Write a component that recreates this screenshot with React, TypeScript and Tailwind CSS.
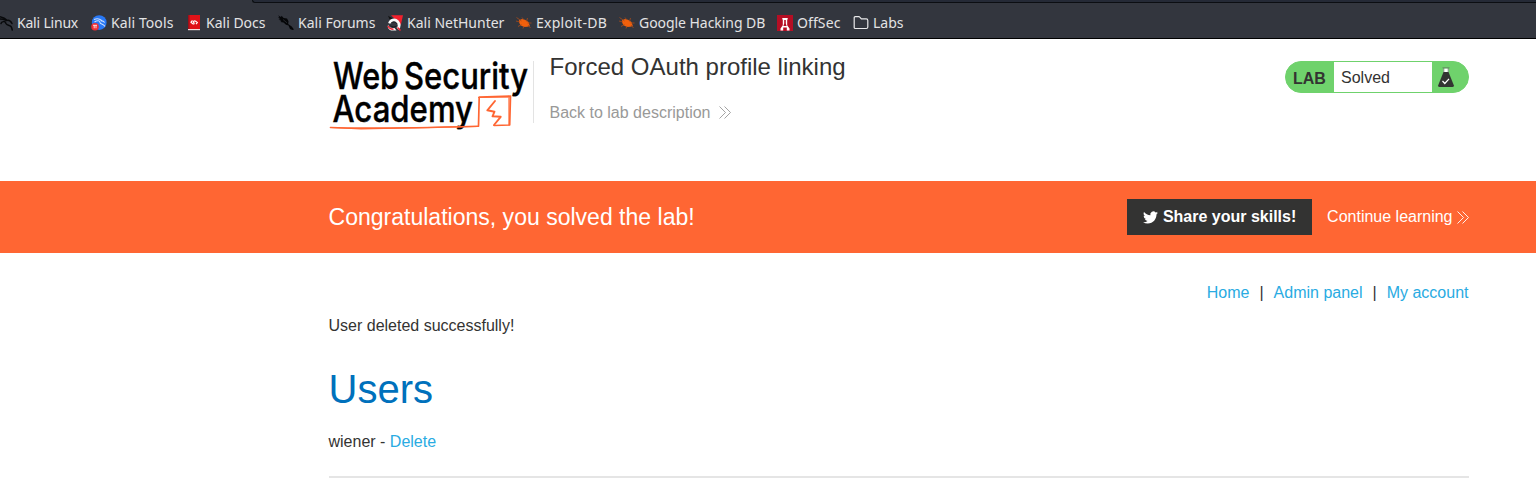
import React from "react";

const DragonIcon = () => (
  <svg viewBox="0 0 16 16" className="size-4" fill="none" stroke="#08090b" strokeLinecap="round">
    <path d="M1 1.500C5 2 8 3 10 5.500M0 4.500c3-1 6-.8 9.500 1M4 8.500c.5-2 4-3 5 0 .8 2.200 3.500 1.200 5 3 .8 1 1 2 1.300 3.500M9.500 5.500c2-.8 4.200.3 5.500 3" strokeWidth="1.500" />
  </svg>
);

const ToolsIcon = () => (
  <svg viewBox="0 0 16 16" className="size-4">
    <circle cx="8.200" cy="7.600" r="7.400" fill="#2878f5" />
    <path d="M3 4.500c3-1.200 6-.5 7.500 1M3.500 7c3-2 5.500-1.500 5.500.5s3.500 1 5 4M10 6c1.500-.4 2.600.2 3.600 1.500" fill="none" stroke="#d0e1fc" strokeWidth="1.100" />
    <circle cx="4" cy="11.700" r="3.800" fill="#ee2f35" />
    <path d="M2 10.300h4M3.200 10.300v3M5 10.300v3" stroke="#fff" strokeWidth=".8" />
  </svg>
);

const DocsIcon = () => (
  <svg viewBox="0 0 16 16" className="size-4">
    <path d="M2 0h12v14H2z" fill="#e01218" />
    <path d="M2 0h1.500v14H2z" fill="#9f1019" />
    <path d="M2 14h12v1.200H2z" fill="#f3d9da" />
    <path d="M6.500 5.500 5 7.200 6.700 8.800c1.500.5 1.800-.4 1-1.300s.3-2.200 2-1.200l1.600 1.300L10 9.200" fill="none" stroke="#fff" strokeWidth="1.200" />
  </svg>
);

const ForumsIcon = () => (
  <svg viewBox="0 0 16 16" className="size-4">
    <path d="M0 .3 3 2 3.600.8l2 2.200 3.400.5 1.500 2.800-.3 2.700 3.500 2.500 2.300 3-1.500.5-2.500-1-1.500-3.500L8 9.800 5.500 7.500 2.500 7l1-1L.5 4.500l2-.3L0 2.500l1.500-.3z" fill="#050608" />
    <path d="m5 4.500 4 3.300" stroke="#44474e" strokeWidth=".5" />
  </svg>
);

const NetHunterIcon = () => (
  <svg viewBox="0 0 16 16" className="size-4">
    <path d="M4 .3h12L13.800 10 9 5z" fill="#f3202d" />
    <path d="M1 .8 6 3.500 2.500 4.300z" fill="#111" />
    <path d="M2.500 8.500C3.500 5 8 3.800 10.500 6.500c2.700 3.200 2 5.500 0 7.300" fill="none" stroke="#f7f7f7" strokeWidth="2.800" />
    <path d="M1 9.500c1 3 3 3.500 6.500 3.500l2 2.500H4Q0 14 1 9.500z" fill="#f7f7f7" />
    <path d="M1 11c1 2.500 3 3.200 5.500 3.200M10.500 12.500l3 3" fill="none" stroke="#ef2333" strokeWidth="1.500" />
    <path d="M3.500 8.500c2-2 5-2.200 6.500.3M3.500 10.800c2 1.300 4.200 1.500 6 .2" fill="none" stroke="#15171c" strokeWidth=".9" />
  </svg>
);

const BugIcon = () => (
  <svg viewBox="0 0 16 16" className="size-4">
    <path d="M3 5.200 6 4l3 .8L12.500 7l1.300 4-2.500.8-3.300.2-3.500-1.700-1.300-2.500z" fill="#f1600c" />
    <path d="m.5 2.500 5 3.500M0 6l4 1M2 11.500 5.500 9.500M7 13.500l1-2.500M6 2.500l1.500 2M11.500 3l-1 3.500M11.500 8h4M12 10l2.500 3" stroke="#a94b1b" strokeWidth=".8" />
  </svg>
);

const OffSecIcon = () => (
  <svg viewBox="0 0 16 16" className="size-4">
    <path d="M0 0h16v16H0z" fill="#b50e24" />
    <path d="M5.300 3h5.400v1.500h-.5v5.800l2.300 3.200v2H9.800v-3H6.200v3H3.500v-2l2.300-3.200V4.500h-.5z" fill="#fff" />
    <path d="M7.200 5h1.600v3.500l.8 2.500H6.400l.8-2.500z" fill="#b50e24" />
  </svg>
);

const FolderIcon = () => (
  <svg viewBox="0 0 16 16" className="size-4" fill="none" stroke="#e8e8e9" strokeWidth="1.200" strokeLinejoin="round">
    <path d="M1.200 12.800V2.700q0-1 1-1h3.600q.6 0 1 .5l1.500 1.700h5q1.500 0 1.500 1.500v6.600q0 1.500-1.500 1.500H2.400q-1.200 0-1.200-.7z" />
  </svg>
);

const bookmarks = [
  { label: "Kali Linux", Icon: DragonIcon, width: "w-[94px]", track: "tracking-[-0.2px]" },
  { label: "Kali Tools", Icon: ToolsIcon, width: "w-[95px]", track: "tracking-[0.1px]" },
  { label: "Kali Docs", Icon: DocsIcon, width: "w-[92px]", track: "" },
  { label: "Kali Forums", Icon: ForumsIcon, width: "w-[109px]", track: "" },
  { label: "Kali NetHunter", Icon: NetHunterIcon, width: "w-[129px]", track: "" },
  { label: "Exploit-DB", Icon: BugIcon, width: "w-[103px]", track: "tracking-[0.27px]" },
  { label: "Google Hacking DB", Icon: BugIcon, width: "w-[158px]", track: "tracking-[-0.05px]" },
  { label: "OffSec", Icon: OffSecIcon, width: "w-[76px]", track: "tracking-[0.1px]" },
  { label: "Labs", Icon: FolderIcon, width: "w-[60px]", track: "" },
];

const DoubleChevron = ({ className }: { className: string }) => (
  <svg viewBox="0 0 12 13" className={className} fill="none" stroke="currentColor" strokeWidth=".9">
    <path d="m.5.5 6 6-6 6M5.500.5l6 6-6 6" />
  </svg>
);

const Logo = () => (
  <svg viewBox="0 0 204 78" className="h-[78px] w-[204px] overflow-visible" role="img" aria-label="Web Security Academy">
    <g fill="#000" stroke="#000" strokeWidth=".4" fontFamily="Inter, sans-serif" fontSize="36.500" fontWeight="500">
      <text x="4" y="33.300" textLength="66" lengthAdjust="spacingAndGlyphs">Web</text>
      <text x="75" y="33.300" textLength="124" lengthAdjust="spacingAndGlyphs">Security</text>
      <text x="3.500" y="66" textLength="140.500" lengthAdjust="spacingAndGlyphs">Academy</text>
    </g>
    <g fill="none" stroke="#ff6633" strokeLinejoin="round" strokeLinecap="round">
      <path d="M1.500 71.500c40 1.700 90 .3 148-1.300l.7-29.200 31.300-.8-.8 28.800-15.500.5" strokeWidth="1.700" />
      <path d="m2 71.500 30 1.300 117.500-2.300M149.500 41.500l31.500-.5M180 40v29" strokeWidth="1.200" />
      <path d="M166 45 158.300 54.300l7.200 1.400-2 4.600 8.200.5L165 69" strokeWidth="1.900" />
    </g>
  </svg>
);

const Flask = () => (
  <svg viewBox="0 0 18 21" className="h-[21px] w-[18px]">
    <path d="M6.500 1.500h5v5h-5z" fill="#fff" />
    <path d="M5.500.8h7M6.800 1v5M11.200 1v5" fill="none" stroke="#607860" strokeWidth=".8" />
    <path d="M6.500 5h5l5.300 13.200q.7 1.800-1.300 1.800h-13Q.5 20 1.200 18.200z" fill="#333332" />
    <path d="m5.500 14 2.300 2.500 4.200-4.700" fill="none" stroke="#fff" strokeWidth="1.200" />
  </svg>
);

const Twitter = () => (
  <svg viewBox="0 0 24 24" className="size-[15px] shrink-0" fill="#fff">
    <path d="M23.950 4.570a10 10 0 0 1-2.820.77 4.960 4.960 0 0 0 2.160-2.720c-.95.550-2 .950-3.130 1.180a4.920 4.920 0 0 0-8.380 4.480C7.690 8.090 4.070 6.130 1.640 3.160a4.820 4.820 0 0 0-.67 2.480c0 1.710.87 3.210 2.190 4.100a4.900 4.900 0 0 1-2.230-.62v.06a4.920 4.920 0 0 0 3.950 4.830 5 5 0 0 1-2.210.09 4.940 4.940 0 0 0 4.600 3.420A9.870 9.870 0 0 1 0 19.540a14 14 0 0 0 7.550 2.210c9.050 0 14-7.500 14-13.980 0-.21 0-.42-.02-.63a9.940 9.940 0 0 0 2.420-2.570z" />
  </svg>
);

export default function App() {
  return (
    <div className="h-[481px] w-full overflow-hidden bg-white font-['Liberation_Sans',sans-serif] text-base leading-6 text-[#333332]">
      <nav className="flex h-[39px] flex-col overflow-hidden border-b border-black bg-[#33363e]">
        <div className="flex h-[3px] shrink-0 justify-end bg-[#33363e]">
          <div className="h-[3px] w-[1284px] rounded-bl-[3px] border-b border-l border-[#0c0e12] bg-[#252a36]" />
        </div>
        <div className="-ml-[3px] flex h-[35px] items-center pt-[5px] font-['Noto_Sans',sans-serif] text-sm text-[#e3e3e4]">
          {bookmarks.map(({ label, Icon, width, track }) => (
            <a key={label} className={`flex h-5 shrink-0 items-center gap-1 whitespace-nowrap ${width} ${track}`}>
              <Icon />
              <span>{label}</span>
            </a>
          ))}
        </div>
      </nav>

      <header className="ml-[329px] flex h-[142px] w-[1140px] items-start">
        <div className="mt-[17px] h-[78px] w-[204px] shrink-0">
          <Logo />
        </div>
        <div className="mt-[22px] h-[62px] w-px bg-[#e3e3e3]" />
        <div className="ml-[15.500px] flex-1 pt-[13px]">
          <h1 className="text-2xl leading-[30px]">Forced OAuth profile linking</h1>
          <a className="mt-[19px] flex items-center gap-[8.500px] text-[#999998]">
            Back to lab description
            <DoubleChevron className="mb-0.5 h-[13px] w-3" />
          </a>
        </div>
        <div className="mt-[22px] flex h-8 w-[184px] overflow-hidden rounded-full border border-[#6fd26c] bg-[#6fd26c]">
          <strong className="w-12 pl-[7px] leading-[34px]">LAB</strong>
          <span className="w-[98px] bg-white pl-[7px] leading-[31px]">Solved</span>
          <span className="flex items-center pl-[5px]"><Flask /></span>
        </div>
      </header>

      <section className="h-[72px] bg-[#ff6633] text-white">
        <div className="ml-[328.500px] flex h-full w-[1140.500px] items-center">
          <h2 className="flex-1 text-[23.040px]">Congratulations, you solved the lab!</h2>
          <button className="flex h-9 w-[185px] items-center justify-center gap-[4.500px] bg-[#333332] pl-[0.500px] font-bold">
            <Twitter />
            Share your skills!
          </button>
          <a className="ml-[15px] flex items-center gap-[4.500px]">
            Continue learning
            <DoubleChevron className="h-[13px] w-3" />
          </a>
        </div>
      </section>

      <main className="ml-[328.500px] w-[1140.500px] pt-7">
        <nav className="flex justify-end gap-[10px] pr-[0.500px] text-[#29abe2]">
          <a>Home</a>
          <span className="text-[#333332]">|</span>
          <a>Admin panel</a>
          <span className="text-[#333332]">|</span>
          <a>My account</a>
        </nav>
        <p className="mt-[9px]">User deleted successfully!</p>
        <h1 className="mt-[26px] text-[40px] leading-[50px] text-[#0071bc]">Users</h1>
        <p className="mt-4">
          wiener - <a className="text-[#29abe2]">Delete</a>
        </p>
        <hr className="mt-[22px] border-t-2 border-[#e5e5e5]" />
      </main>
    </div>
  );
}
